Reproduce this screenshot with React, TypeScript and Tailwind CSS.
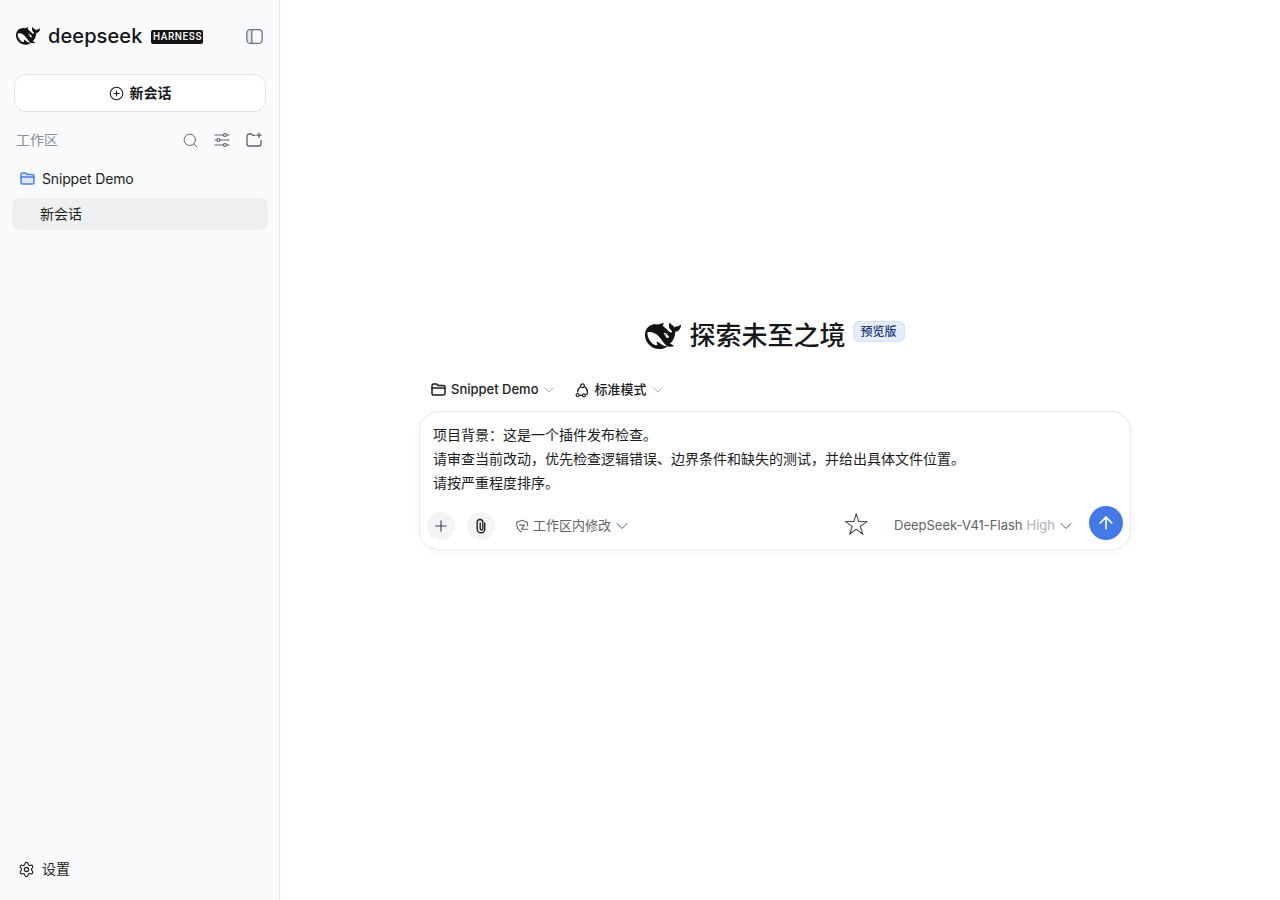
import React from "react";
import { ArrowUp, ChevronDown, Plus, Search, Settings, CirclePlus } from "lucide-react";

const WHALE =
  "M23.748 4.482c-.254-.124-.364.113-.512.234-.051.039-.094.09-.137.136-.372.397-.806.657-1.373.626-.829-.046-1.537.214-2.163.848-.133-.782-.575-1.248-1.247-1.548-.352-.156-.708-.311-.955-.65-.172-.241-.219-.51-.305-.774-.055-.16-.11-.323-.293-.35-.2-.031-.278.136-.356.276-.313.572-.434 1.202-.422 1.84.027 1.436.633 2.58 1.838 3.393.137.093.172.187.129.323-.082.28-.18.552-.266.833-.055.179-.137.217-.329.14a5.526 5.526 0 01-1.736-1.18c-.857-.828-1.631-1.742-2.597-2.458a11.365 11.365 0 00-.689-.471c-.985-.957.13-1.743.388-1.836.27-.098.093-.432-.779-.428-.872.004-1.67.295-2.687.684a3.055 3.055 0 01-.465.137 9.597 9.597 0 00-2.883-.102c-1.885.21-3.39 1.102-4.497 2.623C.082 8.606-.231 10.684.152 12.85c.403 2.284 1.569 4.175 3.36 5.653 1.858 1.533 3.997 2.284 6.438 2.14 1.482-.085 3.133-.284 4.994-1.86.47.234.962.327 1.78.397.63.059 1.236-.03 1.705-.128.735-.156.684-.837.419-.961-2.155-1.004-1.682-.595-2.113-.926 1.096-1.296 2.746-2.642 3.392-7.003.05-.347.007-.565 0-.845-.004-.17.035-.237.23-.256a4.173 4.173 0 001.545-.475c1.396-.763 1.96-2.015 2.093-3.517.02-.23-.004-.467-.247-.588zM11.581 18c-2.089-1.642-3.102-2.183-3.52-2.16-.392.024-.321.471-.235.763.09.288.207.486.371.739.114.167.192.416-.113.603-.673.416-1.842-.14-1.897-.167-1.361-.802-2.5-1.86-3.301-3.307-.774-1.393-1.224-2.887-1.298-4.482-.02-.386.093-.522.477-.592a4.696 4.696 0 011.529-.039c2.132.312 3.946 1.265 5.468 2.774.868.86 1.525 1.887 2.202 2.891.72 1.066 1.494 2.082 2.48 2.914.348.292.625.514.891.677-.802.09-2.14.11-3.054-.614zm1-6.44a.306.306 0 01.415-.287.302.302 0 01.2.288.306.306 0 01-.31.307.303.303 0 01-.304-.308zm3.11 1.596c-.2.081-.399.151-.59.16a1.245 1.245 0 01-.798-.254c-.274-.23-.47-.358-.552-.758a1.73 1.73 0 01.016-.588c.07-.327-.008-.537-.239-.727-.187-.156-.426-.199-.688-.199a.559.559 0 01-.254-.078c-.11-.054-.2-.19-.114-.358.028-.054.16-.186.192-.21.356-.202.767-.136 1.146.016.352.144.618.408 1.001.782.391.451.462.576.685.914.176.265.336.537.445.848.067.195-.019.354-.25.452z";

function Whale({ className }: { className?: string }) {
  return (
    <svg viewBox="0 0 24 24" className={className} fill="currentColor" fillRule="evenodd">
      <path d={WHALE} />
    </svg>
  );
}

// folder with the darker band across the top, tinted version is used in the tree
function FolderIcon({ className, tint }: { className?: string; tint?: boolean }) {
  return (
    <svg viewBox="0 0 16 16" className={className} fill="none" stroke="currentColor" strokeWidth="1.5" strokeLinejoin="round">
      <path
        d="M1 3.800c0-1 .7-1.700 1.700-1.700h2.500c.4 0 .8.200 1.100.500l.8.800h5.200c1 0 1.700.700 1.700 1.700v6.300c0 1-.7 1.700-1.700 1.700H2.700c-1 0-1.700-.7-1.700-1.700V3.800z"
        fill={tint ? "#dbe7fd" : "none"}
      />
      <path d="M1 7.300c0-.8.500-1.300 1.300-1.300h10.400c.8 0 1.300.500 1.300 1.300" />
    </svg>
  );
}

function SidebarToggle() {
  return (
    <svg viewBox="0 0 16 16" className="w-[17px] h-[17px] text-[#6b7280]" fill="none" stroke="currentColor" strokeWidth="1.2">
      <path d="M1 4.500c0-1.700 1-2.700 2.500-2.700h2v12.400h-2C2 14.200 1 13.200 1 11.500z" fill="currentColor" fillOpacity="0.14" stroke="none" />
      <rect x="0.800" y="1.600" width="14.400" height="12.800" rx="3" />
      <path d="M5.500 1.600v12.800" />
    </svg>
  );
}

function SlidersIcon() {
  return (
    <svg viewBox="0 0 16 16" className="w-4 h-4" fill="none" stroke="currentColor" strokeWidth="1.200" strokeLinecap="round">
      <path d="M1 3h8.500M12.500 3H15M1 8h2M6 8h9M1 13h8.500M12.500 13H15" />
      <circle cx="11" cy="3" r="1.500" />
      <circle cx="4.500" cy="8" r="1.500" />
      <circle cx="11" cy="13" r="1.500" />
    </svg>
  );
}

function FolderPlusIcon() {
  return (
    <svg viewBox="0 0 16 16" className="w-4 h-4" fill="none" stroke="currentColor" strokeWidth="1.300" strokeLinecap="round" strokeLinejoin="round">
      <path d="M8.800 3.400H6.900L5.900 2.300c-.2-.2-.4-.3-.7-.3H3C1.900 2 1 2.900 1 4v8c0 1.100.9 2 2 2h10c1.100 0 2-.9 2-2V8.500" />
      <path d="M13 .8v4.600M10.700 3.100h4.600" />
    </svg>
  );
}

function ModeIcon() {
  return (
    <svg viewBox="0 0 16 16" className="w-[15px] h-[15px]" fill="none" stroke="currentColor" strokeWidth="1.300" strokeLinecap="round">
      <circle cx="8" cy="3" r="2" />
      <circle cx="2.800" cy="12.800" r="1.600" />
      <circle cx="9.500" cy="13.200" r="1.600" />
      <path d="M5.800 4C4 5.200 3 7 2.800 9.500M10.300 4c1.900 1.300 3.200 3.500 3 6 0 1-.4 1.700-1 2.300M4.800 13.200h2.800" />
    </svg>
  );
}

function ShieldIcon() {
  return (
    <svg viewBox="0 0 16 16" className="w-[14px] h-[14px]" fill="none" stroke="currentColor" strokeWidth="1.200" strokeLinecap="round" strokeLinejoin="round">
      <path d="M14 8c.2-1.300.3-2.600.2-4.300L8 1.500 1.800 3.700c-.1 5.800 1.300 9 5.700 10.800" />
      <path d="M5.300 7h5.400L7.300 11.800h7.200" />
    </svg>
  );
}

function ClipIcon() {
  return (
    <svg viewBox="0 0 16 16" className="w-4 h-4" fill="none" stroke="currentColor" strokeWidth="1.400" strokeLinecap="round">
      <path d="M11.800 5v6a3.800 3.800 0 0 1-7.600 0V4.300a2.800 2.800 0 0 1 5.600 0v6.400a1.300 1.300 0 0 1-2.600 0V5" />
    </svg>
  );
}

function Sidebar() {
  return (
    <aside className="w-[280px] h-full shrink-0 flex flex-col bg-[#f9fafc] border-r border-[#e5e7eb]">
      <div className="h-[72px] pl-4 pr-4 flex items-center">
        <Whale className="w-6 h-6 text-[#111315]" />
        <span className="ml-2 text-[20px] leading-none font-medium tracking-[0.1px] text-[#111315]">deepseek</span>
        <span className="ml-[9px] mt-px h-[14px] w-[52px] text-center rounded-[2px] bg-[#111315] text-white text-[10px] leading-[14px] font-medium tracking-[0.6px] font-['Roboto',sans-serif]">HARNESS</span>
        <span className="ml-auto"><SidebarToggle /></span>
      </div>
      <div className="pl-[14px] pr-[13px] pt-[2px]">
        <button className="w-full h-[38px] flex items-center justify-center gap-[6px] rounded-xl bg-white border border-[#e2e4e8] text-sm font-semibold text-[#16181b]">
          <CirclePlus className="w-[15px] h-[15px]" strokeWidth={1.7} />
          新会话
        </button>
      </div>
      <div className="mt-[14px] h-[28px] pl-4 pr-[17px] flex items-center text-[#5f6368]">
        <span className="text-sm text-[#8b8f97]">工作区</span>
        <div className="ml-auto flex items-center gap-4">
          <Search className="w-[17px] h-[17px] -mr-px" strokeWidth={1.4} />
          <SlidersIcon />
          <FolderPlusIcon />
        </div>
      </div>
      <div className="mt-[7px] h-[36px] pl-5 flex items-center gap-[6px]">
        <FolderIcon className="w-4 h-4 text-[#4b7fea]" tint />
        <span className="text-sm tracking-[-0.15px] text-[#1c1e21]">Snippet Demo</span>
      </div>
      <div className="mt-px ml-3 mr-[11px] h-8 pl-7 flex items-center rounded-lg bg-[#eeeff1] text-sm text-[#1c1e21]">新会话</div>
      <div className="mt-auto h-[62px] pl-[18px] flex items-center gap-2 text-sm text-[#1c1e21]">
        <Settings className="w-[17px] h-[17px] -mr-px" strokeWidth={1.6} />
        设置
      </div>
    </aside>
  );
}

function Composer() {
  return (
    <div className="w-[712px] h-[139px] flex flex-col rounded-[20px] bg-white border border-[#e8e9ec] shadow-[0_2px_8px_rgba(0,0,0,0.04)]">
      <div className="px-[13px] pt-[11px] text-sm leading-6 text-[#1a1c1f]">
        <p>项目背景：这是一个插件发布检查。</p>
        <p>请审查当前改动，优先检查逻辑错误、边界条件和缺失的测试，并给出具体文件位置。</p>
        <p>请按严重程度排序。</p>
      </div>
      <div className="mt-[12px] pl-[7px] pr-[7px] flex items-center">
        <button className="w-7 h-7 mt-[3px] flex items-center justify-center rounded-full bg-[#f3f4f6] text-[#3b3f45]">
          <Plus className="w-[18px] h-[18px]" strokeWidth={1.5} />
        </button>
        <button className="ml-3 w-7 h-7 mt-[3px] flex items-center justify-center rounded-full bg-[#f3f4f6] text-[#1c1e21]">
          <ClipIcon />
        </button>
        <div className="ml-5 mt-[3px] flex items-center gap-1 text-[13px] text-[#5f6368]">
          <ShieldIcon />
          工作区内修改
          <ChevronDown className="-ml-[3px] w-5 h-5 text-[#9ca3af]" strokeWidth={1.3} />
        </div>
        <span className="ml-auto text-[31px] leading-[34px] text-[#1a1c1f] font-['DejaVu_Sans',sans-serif]">☆</span>
        <div className="ml-[24px] mt-[3px] flex items-center text-[13px] text-[#5f6368]">
          DeepSeek-V41-Flash
          <span className="ml-1 text-[#aeb2b8]">High</span>
          <ChevronDown className="ml-px w-5 h-5 text-[#9ca3af]" strokeWidth={1.3} />
        </div>
        <button className="ml-[13px] -mt-[3px] w-[34px] h-[34px] flex items-center justify-center rounded-full bg-[#4479e8] text-white">
          <ArrowUp className="w-5 h-5" strokeWidth={2} />
        </button>
      </div>
    </div>
  );
}

export default function App() {
  return (
    <div className="w-full h-[900px] flex bg-white font-['Inter','Noto_Sans_CJK_SC',sans-serif] overflow-hidden">
      <Sidebar />
      <main className="flex-1 flex justify-center pr-[10px] pb-[32px]">
        <div className="w-[712px] flex flex-col justify-center">
          <div className="h-[36px] flex items-center justify-center">
            <Whale className="w-9 h-9 text-[#111315]" />
            <span className="ml-[8px] text-[26px] leading-9 font-medium text-[#15171a]">探索未至之境</span>
            <span className="ml-[7px] self-start mt-[3px] h-[21px] px-[7px] flex items-center rounded-md bg-[#e4ecfa] border border-[#d5e0f5] text-xs font-medium text-[#1c3a7a]">预览版</span>
          </div>
          <div className="mt-[24px] h-[24px] pl-3 flex items-center text-[13px] font-medium text-[#1a1c1f]">
            <FolderIcon className="w-4 h-4" />
            <span className="ml-1">Snippet Demo</span>
            <ChevronDown className="ml-[2px] w-4 h-4 text-[#9ca3af]" strokeWidth={1.3} />
            <span className="ml-[18px]"><ModeIcon /></span>
            <span className="ml-[5px]">标准模式</span>
            <ChevronDown className="ml-[3px] w-4 h-4 text-[#9ca3af]" strokeWidth={1.3} />
          </div>
          <div className="mt-[9px]"><Composer /></div>
        </div>
      </main>
    </div>
  );
}
